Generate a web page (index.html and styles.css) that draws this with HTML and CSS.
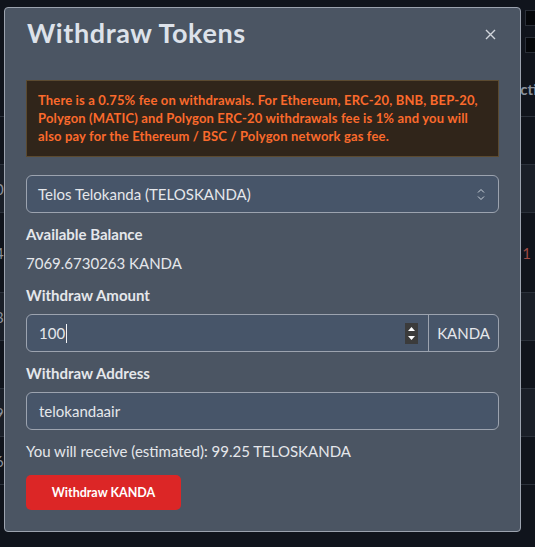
FILE: index.html
```html
<!DOCTYPE html>
<html lang="en">
  <head>
    <meta charset="UTF-8" />
    <meta name="viewport" content="width=device-width, initial-scale=1.0" />
    <title>Withdraw Tokens</title>
    <link rel="stylesheet" href="styles.css">
  </head>
  <body>
    <div class="page">
      <div class="table-head">
        <div class="checks">
          <span class="check"></span>
          <span class="check"></span>
        </div>
        <div class="head-label">Action</div>
      </div>
      <div class="row"><span class="cell-left"></span><span class="cell-right"></span></div>
      <div class="row alt"><span class="cell-left">0</span><span class="cell-right"></span></div>
      <div class="row tall"><span class="cell-left">4</span><span class="cell-right red">1</span></div>
      <div class="row alt"><span class="cell-left">8</span><span class="cell-right"></span></div>
      <div class="row"><span class="cell-left"></span><span class="cell-right"></span></div>
      <div class="row alt"><span class="cell-left">9</span><span class="cell-right"></span></div>
      <div class="row"><span class="cell-left">6</span><span class="cell-right"></span></div>
    </div>

    <div class="modal">
      <div class="modal-header">
        <h2>Withdraw Tokens</h2>
        <button class="close" aria-label="Close">
          <svg width="11" height="11" viewBox="0 0 11 11">
            <path d="M1 1 L10 10 M10 1 L1 10" stroke="#d1d5db" stroke-width="1.4" fill="none" />
          </svg>
        </button>
      </div>

      <div class="alert">
        There is a 0.75% fee on withdrawals. For Ethereum, ERC-20, BNB, BEP-20,
        Polygon (MATIC) and Polygon ERC-20 withdrawals fee is 1% and you will
        also pay for the Ethereum / BSC / Polygon network gas fee.
      </div>

      <div class="select">
        <span>Telos Telokanda (TELOSKANDA)</span>
        <svg width="8" height="13" viewBox="0 0 8 13">
          <path d="M1 4.5 L4 1.5 L7 4.5 M1 8.5 L4 11.5 L7 8.5" stroke="#cbd2da" stroke-width="1" fill="none" />
        </svg>
      </div>

      <div class="label">Available Balance</div>
      <div class="value">7069.6730263 KANDA</div>

      <div class="label">Withdraw Amount</div>
      <div class="input-group">
        <div class="amount">
          <span class="typed">100</span><span class="caret"></span>
          <span class="spinner">
            <svg width="13" height="21" viewBox="0 0 13 21">
              <path d="M3 8 L6.5 4 L10 8 Z M3 13 L6.5 17 L10 13 Z" fill="#ffffff" />
            </svg>
          </span>
        </div>
        <div class="addon">KANDA</div>
      </div>

      <div class="label">Withdraw Address</div>
      <div class="input">telokandaair</div>

      <div class="receive">You will receive (estimated): 99.25 TELOSKANDA</div>

      <button class="btn-withdraw">Withdraw KANDA</button>
    </div>
  </body>
</html>
```

FILE: styles.css
```css
body {
  margin: 0;
  background-color: #10141c;
  font-family: "Lato", "Open Sans", sans-serif;
  color: #e5e7eb;
  overflow: hidden;
}
.page {
  width: 535px;
  height: 547px;
  overflow: hidden;
}
.table-head {
  height: 116px;
  border-bottom: 1px solid #2b313b;
  position: relative;
}
.checks {
  position: absolute;
  right: -6px;
  top: 10px;
  display: flex;
  flex-direction: column;
  gap: 11px;
}
.check {
  width: 14px;
  height: 14px;
  background: #05070a;
  border: 1px solid #2a2f38;
  display: block;
}
.head-label {
  position: absolute;
  left: 510px;
  top: 80px;
  font-weight: 700;
  font-size: 15px;
  color: #8a919c;
  white-space: nowrap;
}
.row {
  height: 47px;
  border-bottom: 1px solid #2b313b;
  display: flex;
  justify-content: space-between;
  align-items: center;
  font-size: 15px;
  color: #8a919c;
}
.row.alt {
  background: #1a1f28;
}
.row.tall {
  height: 79px;
}
.cell-left {
  margin-left: -5px;
}
.cell-right {
  margin-right: 4px;
}
.red {
  color: #9c4a44;
}

/* modal */
.modal {
  position: fixed;
  top: 7px;
  left: 4px;
  width: 473px;
  padding: 0 21px 21px;
  background-color: #4b5563;
  border: 1px solid #9ca3af;
  border-radius: 4px;
}
.modal-header {
  display: flex;
  justify-content: space-between;
  align-items: center;
  height: 48px;
  margin-bottom: 24px;
}
.modal-header h2 {
  margin: 0;
  padding-left: 1px;
  font-size: 27px;
  letter-spacing: 0.6px;
  font-weight: 700;
  color: #dde2ea;
}
.close {
  background: none;
  border: none;
  padding: 0;
  margin-right: 3px;
  margin-top: 4px;
  display: flex;
}
.alert {
  background-color: #30251a;
  border: 1px solid #5b4a30;
  padding: 10px 11px 11px;
  font-size: 13px;
  letter-spacing: 0.15px;
  font-weight: 700;
  line-height: 18px;
  color: #fb6a2c;
}
.select {
  margin-top: 18px;
  height: 36px;
  border: 1px solid #9ca3af;
  border-radius: 6px;
  background-color: #475569;
  display: flex;
  align-items: center;
  justify-content: space-between;
  padding: 0 13px 0 11px;
  font-size: 15px;
  color: #e5e7eb;
}
.label {
  font-weight: 700;
  font-size: 15px;
  margin-top: 12px;
  margin-bottom: 10px;
  color: #e5e7eb;
}
.value {
  font-size: 15px;
  color: #e5e7eb;
  margin-top: 11px;
  margin-bottom: 14px;
}
.input-group {
  display: flex;
  height: 36px;
  border: 1px solid #9ca3af;
  border-radius: 6px;
  background-color: #475569;
}
.amount {
  flex: 1;
  display: flex;
  align-items: center;
  padding: 0 10px 0 12px;
  font-size: 15px;
}
.typed {
  color: #e5e7eb;
}
.caret {
  width: 1px;
  height: 19px;
  background: #f3f4f6;
  margin-left: 1px;
}
.spinner {
  margin-left: auto;
  width: 13px;
  height: 21px;
  background: #3b3b3b;
  display: flex;
}
.addon {
  display: flex;
  align-items: center;
  padding: 0 8px;
  border-left: 1px solid #9ca3af;
  font-size: 15px;
  color: #e5e7eb;
}
.input {
  height: 36px;
  border: 1px solid #9ca3af;
  border-radius: 6px;
  background-color: #475569;
  display: flex;
  align-items: center;
  padding: 0 12px;
  font-size: 15px;
  color: #e5e7eb;
}
.receive {
  margin-top: 12px;
  font-size: 15px;
  color: #e5e7eb;
}
.btn-withdraw {
  margin-top: 15px;
  width: 155px;
  height: 35px;
  background-color: #dc2626;
  color: #fff;
  border: none;
  border-radius: 5px;
  font-family: inherit;
  font-weight: 700;
  font-size: 12.5px;
}
```
